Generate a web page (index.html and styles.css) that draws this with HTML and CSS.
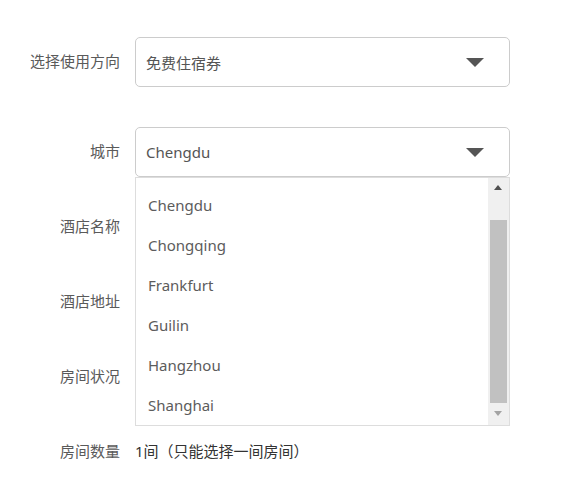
FILE: index.html
```html
<!DOCTYPE html>
<html lang="zh-CN">
<head>
  <meta charset="UTF-8">
  <meta name="viewport" content="width=device-width, initial-scale=1.0">
  <title>住宿券</title>
  <link rel="stylesheet" href="styles.css">
</head>
<body>
  <div class="form">
    <div class="row first">
      <label class="label">选择使用方向</label>
      <div class="control">
        <div class="select">
          <span>免费住宿券</span>
          <span class="caret"></span>
        </div>
      </div>
    </div>

    <div class="row">
      <label class="label">城市</label>
      <div class="control">
        <div class="select">
          <span>Chengdu</span>
          <span class="caret"></span>
        </div>
        <div class="dropdown">
          <ul class="options">
            <li>Chengdu</li>
            <li>Chongqing</li>
            <li>Frankfurt</li>
            <li>Guilin</li>
            <li>Hangzhou</li>
            <li>Shanghai</li>
          </ul>
          <div class="scrollbar">
            <span class="arrow up"></span>
            <span class="thumb"></span>
            <span class="arrow down"></span>
          </div>
        </div>
      </div>
    </div>

    <div class="row">
      <label class="label">酒店名称</label>
      <div class="control"></div>
    </div>

    <div class="row">
      <label class="label">酒店地址</label>
      <div class="control"></div>
    </div>

    <div class="row">
      <label class="label">房间状况</label>
      <div class="control"></div>
    </div>

    <div class="row">
      <label class="label">房间数量</label>
      <div class="control value">1间（只能选择一间房间）</div>
    </div>
  </div>
</body>
</html>
```

FILE: styles.css
```css
html, body {
  margin: 0;
  padding: 0;
  background: #fff;
  font-family: "Noto Sans", "Noto Sans CJK SC", sans-serif;
  font-size: 15px;
  color: #555;
}
.form {
  padding-top: 37px;
}
.row {
  display: flex;
  align-items: center;
  height: 50px;
  margin-bottom: 25px;
}
.row.first {
  margin-bottom: 40px;
}
.label {
  width: 120px;
  text-align: right;
  margin-right: 15px;
  margin-top: -3px;
  color: #5a5a5a;
}
.control {
  width: 375px;
  position: relative;
}
.select {
  box-sizing: border-box;
  height: 50px;
  border: 1px solid #ccc;
  border-radius: 5px;
  padding: 0 25px 0 10px;
  display: flex;
  align-items: center;
  justify-content: space-between;
  color: #555;
}
.caret {
  width: 0;
  height: 0;
  border-left: 9.5px solid transparent;
  border-right: 9.5px solid transparent;
  border-top: 9px solid #555;
  margin-top: 1px;
}
.dropdown {
  position: absolute;
  top: 100%;
  left: 0;
  z-index: 2;
  box-sizing: border-box;
  width: 375px;
  height: 249px;
  border: 1px solid #ddd;
  background: #fff;
  overflow: hidden;
}
.options {
  list-style: none;
  margin: 0;
  padding: 7px 0 0;
}
.options li {
  height: 40px;
  line-height: 40px;
  padding-left: 12px;
  color: #5c5c5c;
}
.scrollbar {
  position: absolute;
  top: 0;
  right: 0;
  bottom: 0;
  width: 21px;
  background: #f0f0f0;
}
.thumb {
  position: absolute;
  top: 42px;
  left: 2px;
  width: 17px;
  height: 183px;
  background: #c1c1c1;
}
.arrow {
  position: absolute;
  left: 6px;
  width: 0;
  height: 0;
  border-left: 4.5px solid transparent;
  border-right: 4.5px solid transparent;
}
.arrow.up {
  top: 7px;
  border-bottom: 5px solid #505050;
}
.arrow.down {
  bottom: 9px;
  border-top: 5px solid #a3a3a3;
}
.value {
  font-size: 15px;
  margin-top: -3px;
  color: #333;
}
```
